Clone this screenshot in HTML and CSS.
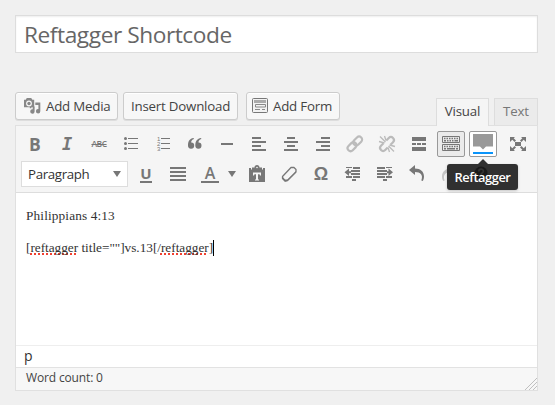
FILE: index.html
```
<!DOCTYPE html>
<html lang="en">
<head>
<meta charset="utf-8">
<title>Edit Post</title>
<link rel="stylesheet" href="styles.css">
</head>
<body>
<main class="page">
  <div class="title-field"><span>Reftagger Shortcode</span></div>

  <div class="media-row">
    <div class="button add-media">
      <svg width="18" height="18" viewBox="0 0 18 18"><path fill="#888" fill-rule="evenodd" d="M1 2.700h1.700L3.800.900h4.400l1.200 1.800h1.800v7.500H8.400v1H6.800v-1H1zM6 3.600a2.900 2.900 0 1 0 0 5.800a2.900 2.900 0 0 0 0-5.800z"/><circle cx="6" cy="6.500" r="1.700" fill="#888"/><path fill="#888" d="M12.300 5.400h5v8.800a2.200 2.200 0 1 1-1.900-2.200V8h-3.100zM11.600 9.500v5a2.200 2.200 0 1 1-1.900-2.200V9.500z"/></svg>
      <span>Add Media</span>
    </div>
    <div class="button insert-download"><span>Insert Download</span></div>
    <div class="button add-form">
      <svg width="16" height="16" viewBox="0 0 16 16"><rect x=".5" y=".5" width="15" height="14" rx="1" fill="#f2f2f2" stroke="#777"/><path fill="#aaa" d="M2 2h12v3H2z"/><path fill="none" stroke="#888" d="M3.500 6.500h10v2.500h-10zM3 11.500h5M10 11.500h3"/></svg>
      <span>Add Form</span>
    </div>
    <div class="tabs">
      <div class="tab active"><span>Visual</span></div>
      <div class="tab"><span>Text</span></div>
    </div>
  </div>

  <section class="editor">
    <div class="toolbar">
      <div class="tool-row first">
        <i class="tool"><b class="glyph bold">B</b></i>
        <i class="tool"><b class="glyph italic">I</b></i>
        <i class="tool"><b class="glyph strike">ABC</b></i>
        <i class="tool"><svg viewBox="0 0 20 20"><path fill="#777" d="M7 4h10v1H7zM7 9h10v1H7zM7 14h10v1H7z"/><g fill="#777"><circle cx="4.500" cy="4.500" r="1.500"/><circle cx="4.500" cy="9.500" r="1.500"/><circle cx="4.500" cy="14.500" r="1.500"/></g></svg></i>
        <i class="tool"><svg viewBox="0 0 20 20"><path fill="#777" d="M8 4h9v1H8zM8 9h9v1H8zM8 14h9v1H8z"/><g class="numbers"><text x="4" y="6.500">1</text><text x="4" y="12">2</text><text x="4" y="17.200">3</text></g></svg></i>
        <i class="tool"><svg viewBox="0 0 20 20"><path fill="#777" d="M8.500 4C4.800 4.500 3 7 3 11.500A3.100 3.100 0 1 0 6.200 8.500C6 7 7 5.500 9 5zM16 4c-3.700.5-5.700 3-5.700 7.500a3.100 3.100 0 1 0 3.200-3c-.2-1.500.8-3 2.900-3.500z"/></svg></i>
        <i class="tool"><svg viewBox="0 0 20 20"><path fill="#777" d="M4 9h12v2H4z"/></svg></i>
        <i class="tool"><svg viewBox="0 0 20 20"><path fill="#777" d="M3 3h9v2H3zM3 7h14v2H3zM3 11h9v2H3zM3 15h14v2H3z"/></svg></i>
        <i class="tool"><svg viewBox="0 0 20 20"><path fill="#777" d="M6 3h8v2H6zM3 7h14v2H3zM6 11h8v2H6zM3 15h14v2H3z"/></svg></i>
        <i class="tool"><svg viewBox="0 0 20 20"><path fill="#777" d="M8 3h9v2H8zM3 7h14v2H3zM8 11h9v2H8zM3 15h14v2H3z"/></svg></i>
        <i class="tool"><svg viewBox="0 0 20 20"><g fill="none" stroke="#bbb" stroke-width="2.200" transform="rotate(-45 10 10)"><rect x="1" y="6.800" width="10" height="6" rx="3"/><rect x="9" y="6.800" width="10" height="6" rx="3"/></g></svg></i>
        <i class="tool"><svg viewBox="0 0 20 20"><g fill="none" stroke="#bbb" stroke-width="2.200" transform="rotate(-45 10 10)"><path d="M8 7H4.500a3 3 0 0 0 0 6H8M12 7h3.500a3 3 0 0 1 0 6H12"/></g><path stroke="#bbb" stroke-width="1.300" d="M8.500 8L3 2.500M9 6.500L7.500 2M7.500 9L2 7.500M11.500 12l5.500 5.500M11 13.500l1.500 4.500M12.500 11l5.500 1.500"/></svg></i>
        <i class="tool"><svg viewBox="0 0 20 20"><path fill="#777" d="M3 3h14v4H3zM3 9h4v2H3zM8 9h4v2H8zM13 9h4v2h-4zM3 13h14v4H3z"/></svg></i>
        <i class="tool"><span class="pressed"><svg viewBox="0 0 20 20"><path fill="none" stroke="#777" d="M1.500 2.500h17v6h-17zM1.500 10.500h17v6h-17z"/><path stroke="#777" stroke-width="1.400" stroke-dasharray="1.500 1" d="M3 4.500h14M3 12.500h14"/><path stroke="#777" stroke-width="1.400" d="M3 6.700h2M6 6.700h1.500M8.500 6.700H10M11 6.700h1.500M13.500 6.700H17M3 14.700h2M6 14.700h8M15 14.700h2"/></svg></span></i>
        <i class="tool"><span class="pressed focused"><svg viewBox="0 0 20 20"><path fill="#999" d="M0 0h20v12.500h-7l-3 3-3-3H0z"/><path fill="#0a94fa" d="M0 18h20v2H0z"/></svg></span>
          <div class="tooltip"><svg class="help-icon" viewBox="0 0 16 16"><circle cx="8" cy="8" r="6.500" fill="#191919"/><path fill="none" stroke="#333" stroke-width="1.700" d="M5.800 6.500c0-3 4.600-3 4.600-.3C10.400 8 8 7.800 8 10M8 11v1.500"/></svg><span>Reftagger</span></div>
        </i>
        <i class="tool fullscreen"><svg viewBox="0 0 20 20"><path fill="#777" d="M7 8h6v4H7zM2 3h5L5.700 4.300 8 6.600 6.600 8 4.300 5.700 2 8zM18 3h-5l1.300 1.300L12 6.600 13.400 8l2.300-2.300L18 8zM2 17h5l-1.300-1.300L8 13.400 6.600 12l-2.300 2.300L2 12zM18 17h-5l1.300-1.300-2.300-2.300 1.400-1.400 2.300 2.300L18 12z"/></svg></i>
      </div>
      <div class="tool-row second">
        <div class="select"><span>Paragraph</span><svg width="8" height="6" viewBox="0 0 8 6"><path fill="#777" d="M0 0h8L4 6z"/></svg></div>
        <i class="tool"><b class="glyph underline">U</b></i>
        <i class="tool"><svg viewBox="0 0 20 20"><path fill="#777" d="M2 3h16v2H2zM2 7h16v2H2zM2 11h16v2H2zM2 15h16v2H2z"/></svg></i>
        <i class="tool"><b class="glyph color">A</b></i>
        <i class="color-arrow"><svg width="8" height="6" viewBox="0 0 8 6"><path fill="#777" d="M0 0h8L4 6z"/></svg></i>
        <i class="tool"><svg viewBox="0 0 20 20"><path fill="#777" d="M2 4h2v1.500h12V4h2v14H2zM5 3.500h2.500C7.500 2 8.500 1 10 1s2.500 1 2.500 2.500H15v2H5z"/><circle cx="10" cy="3.500" r=".8" fill="#f5f5f5"/><path fill="#f5f5f5" d="M6 8.500h8v3h-1l-.5-1.200h-1.500v5l1 .5v.7H8v-.7l1-.5v-5H7.500L7 11.500H6z"/></svg></i>
        <i class="tool"><svg viewBox="0 0 20 20"><path fill="#f5f5f5" stroke="#777" stroke-width="1.300" stroke-linejoin="round" d="M3.500 12.500L12 3.500h3l2 2v2.500L8.500 16.500 6 17l-2.500-2.500z"/><path fill="#777" d="M3.500 12.500L6 15.500h2.500L17 7v1.500L8.500 17 6 17.500l-2.500-3z"/></svg></i>
        <i class="tool"><b class="glyph omega">Ω</b></i>
        <i class="tool"><svg viewBox="0 0 20 20"><path fill="#777" d="M3 3h6v1H3zM10 3h7v2h-7zM8 6h9v2H8zM8 9h9v2H8zM10 12h7v2h-7zM3 12h6v2H3zM9 15h4v2H9zM6 4.500v2.800H8v2H6V12L1.500 8.300z"/></svg></i>
        <i class="tool"><svg viewBox="0 0 20 20"><path fill="#777" d="M11 3h6v1h-6zM2 3h8v2H2zM2 6h10v2H2zM2 9h10v2H2zM2 12h8v2H2zM11 12h6v2h-6zM8 15h4v2H8zM13.500 4.500v2.800H12v2h1.500V12L18 8.300z"/></svg></i>
        <i class="tool"><svg viewBox="0 0 20 20"><path fill="#777" d="M8 1v3.500c5.500 0 9 3 9 8 0 2-.5 3.200-1.200 4.500l-1.500-.5c2.200-5.500-.8-8.500-6.300-8.500V11L2 6z"/></svg></i>
        <i class="tool"><svg viewBox="0 0 20 20"><path fill="#c5c5c5" d="M12 1v3.500c-5.500 0-9 3-9 8 0 2 .5 3.200 1.200 4.500l1.500-.5C3.500 11 6.500 8 12 8v3l6-5z"/></svg></i>
      </div>
    </div>
    <div class="content">
      <p><span class="line-one">Philippians 4:13</span></p>
      <p><span class="line-two">[<u>reftagger</u> title=""]vs.13[/<u>reftagger</u>]</span><span class="caret"></span></p>
    </div>
    <div class="path">p</div>
    <div class="status"><span>Word count: 0</span><svg class="grip" width="12" height="12" viewBox="0 0 12 12"><path stroke="#aaa" stroke-width="1" stroke-dasharray="1 .414" d="M0 12L12 0M4 12l8-8M8 12l4-4"/></svg></div>
  </section>
</main>
</body>
</html>
```
FILE: styles.css
```
* { box-sizing: border-box; }
body { margin: 0; background: #f0f0f0; font-family: "Open Sans", sans-serif; color: #444; }
.page { width: 523px; margin-left: 15px; padding-top: 15px; }
svg { display: block; flex: none; }
.title-field { height: 38px; border: 1px solid #ddd; background: #fff; box-shadow: inset 0 1px 2px rgba(0,0,0,.07); padding-left: 8px; font-size: 22.700px; letter-spacing: -.44px; line-height: 37px; color: #666; white-space: nowrap; }
.media-row { display: flex; margin-top: 39px; height: 33px; }
.button { height: 28px; border: 1px solid #ccc; border-radius: 3px; background: #f7f7f7; box-shadow: inset 0 1px 0 #fff, 0 1px 0 rgba(0,0,0,.08); display: flex; align-items: center; font-size: 13.300px; letter-spacing: -.21px; color: #444; white-space: nowrap; }
.add-media { width: 103px; padding-left: 7px; gap: 5px; }
.insert-download { width: 115px; margin-left: 5px; padding-left: 7px; }
.add-form { width: 94px; margin-left: 8px; padding-left: 5px; gap: 5px; }
.add-form svg { margin-top: -1px; }
.tabs { display: flex; gap: 5px; margin-left: auto; padding-top: 6px; }
.tab { height: 27px; width: 44px; border: 1px solid #ddd; border-bottom: 0; background: #ebebeb; color: #777; font-size: 13.300px; letter-spacing: -.15px; line-height: 25px; text-align: center; }
.tab.active { height: 28px; width: 53px; background: #f5f5f5; color: #444; position: relative; z-index: 1; }
.editor { border: 1px solid #e0e0e0; background: #fff; height: 266px; display: flex; flex-direction: column; }
.toolbar { height: 67px; background: #f5f5f5; border-bottom: 1px solid #ddd; padding-top: 3px; }
.tool-row { display: flex; height: 30px; align-items: center; }
.first { padding-left: 3px; }
.second { padding-left: 5px; }
.tool { width: 32px; height: 30px; flex: none; display: flex; align-items: center; justify-content: center; position: relative; font-style: normal; }
.tool > svg { width: 20px; height: 20px; }
.fullscreen { margin-left: 3px; }
.numbers { font: 6px "Liberation Sans", sans-serif; fill: #777; }
.glyph { color: #777; line-height: 20px; font-weight: 700; }
.bold { font-size: 17.500px; }
.italic { font: italic 700 17px/20px "DejaVu Sans Mono", monospace; }
.strike { font-size: 8.500px; font-weight: 600; text-decoration: line-through; letter-spacing: -.5px; }
.underline { font-size: 15px; line-height: 15px; font-weight: 700; border-bottom: 2px solid #777; width: 12px; height: 17px; display: flex; justify-content: center; }
.color { font-size: 16px; line-height: 15px; font-weight: 600; border-bottom: 2px solid #777; width: 18px; height: 17px; text-align: center; margin-top: 1px; }
.omega { font: 700 18px/20px "Liberation Sans", sans-serif; }
.pressed { width: 28px; height: 26px; border: 1px solid #999; border-radius: 2px; background: #ebebeb; display: flex; align-items: center; justify-content: center; }
.pressed svg { width: 20px; height: 20px; }
.focused { background: #fff; }
.select { width: 107px; height: 26px; border: 1px solid #ddd; background: #fff; display: flex; align-items: center; justify-content: space-between; padding: 0 6px; font-size: 13.300px; letter-spacing: -.35px; color: #333; margin-right: 2px; }
.color-arrow { width: 15px; display: flex; justify-content: center; margin-left: -2px; margin-right: 2px; }
.tooltip { position: absolute; z-index: 2; left: -20px; top: 35px; width: 71px; height: 26px; border-radius: 3px; background: #303030; color: #fff; font-size: 12.800px; letter-spacing: -.42px; font-weight: 600; line-height: 26px; text-align: center; box-shadow: 0 1px 3px rgba(0,0,0,.2); }
.tooltip span { position: relative; }
.tooltip::before { content: ""; position: absolute; left: 31px; top: -5px; border: 5px solid transparent; border-top: 0; border-bottom-color: #303030; }
.help-icon { position: absolute; left: 26px; top: 1px; width: 16px; height: 16px; }
.content { flex: 1; padding: 15px 10px 0; font: 13.300px/16px "Liberation Serif", serif; color: #333; }
.content p { margin: 0 0 16px; display: flex; align-items: center; height: 16px; }
.line-one { letter-spacing: .13px; }
.line-two { letter-spacing: -.03px; }
.content u { text-decoration: underline dotted #f04030 2px; text-underline-offset: 1px; text-decoration-skip-ink: none; }
.caret { width: 1px; height: 16px; background: #000; }
.path { height: 22px; border-top: 1px solid #eee; padding-left: 8px; font-size: 14px; line-height: 20px; color: #333; }
.status { height: 23px; border-top: 1px solid #e2e2e2; background: #f7f7f7; display: flex; align-items: center; justify-content: space-between; padding-left: 10px; font-size: 12px; letter-spacing: -.15px; line-height: 20px; color: #444; }
.status span { padding-bottom: 2px; }
.grip { align-self: flex-end; }
```
